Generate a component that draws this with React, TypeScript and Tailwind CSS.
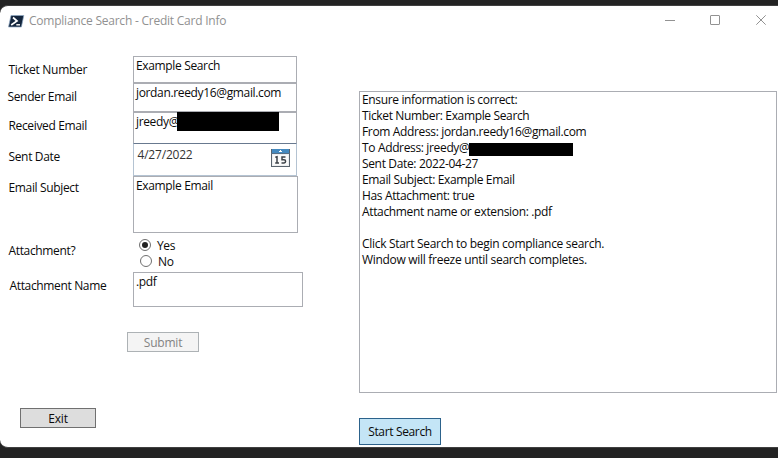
import type { ReactNode } from 'react';

function Row({ label, height, labelClass, children }: { label: string; height: string; labelClass: string; children: ReactNode }) {
  return (
    <div className={`flex ${height}`}>
      <div className={`w-[133px] shrink-0 whitespace-nowrap ${labelClass}`}>{label}</div>
      {children}
    </div>
  );
}

function PowerShellIcon() {
  return (
    <svg width="17" height="13" viewBox="0 0 17 13" className="shrink-0">
      <path d="M3 .5H15.8L13.4 12H.5Z" fill="#14263d" stroke="#8fa9c4" strokeWidth=".7" />
      <path d="M5 2.5L9 6L3.2 10" fill="none" stroke="#fff" strokeWidth="1.7" />
      <path d="M8.3 9.8H12" stroke="#fff" strokeWidth="1.4" />
    </svg>
  );
}

function CalendarIcon() {
  return (
    <svg width="19" height="18" viewBox="0 0 19 18" shapeRendering="crispEdges" className="ml-auto mr-[6px] mt-[2px] shrink-0">
      <rect x=".5" y=".5" width="18" height="17" fill="#eceef0" stroke="#59636d" />
      <rect x="2" y="6" width="15" height="10" fill="#fafafa" />
      <rect x="1" y="0" width="17" height="4" fill="#4489bf" />
      <rect x="0" y="4" width="19" height="1" fill="#566f86" />
      <path d="M9 1H10V3H9ZM8 2H11V3H8Z" fill="#fff" />
      <g fill="none" stroke="#3c4248" strokeWidth="1.5" shapeRendering="auto">
        <path d="M4.3 8.3L6 7.8V14M4.2 14H8" />
        <path d="M14.5 8H11V10.7H13Q14.6 10.7 14.6 12.3T13 14H10.5" />
      </g>
    </svg>
  );
}

function Radio({ checked, label }: { checked?: boolean; label: string }) {
  return (
    <div className={`flex h-4 items-center ${checked ? 'pl-[6px]' : 'pl-[7px]'}`}>
      <span className="flex size-3 items-center justify-center rounded-full border border-[#707070] bg-white">
        {checked && <span className="size-[6px] rounded-full bg-[#212121]" />}
      </span>
      <span className="pl-[6px] pt-[2px]">{label}</span>
    </div>
  );
}

export default function App() {
  return (
    <div className="h-[458px] w-[778px] overflow-hidden bg-[#232323] pt-[5px] font-['Open_Sans','Noto_Sans',sans-serif] text-[12px] leading-4 tracking-[-0.35px] text-[#0a0a0a]">
      <div className="flex h-[443px] flex-col rounded-l-[8px] border-y border-[#404040] bg-white">
        <header className="flex h-[30px] shrink-0 items-center pl-2 tracking-[-0.23px] text-[#919191]">
          <PowerShellIcon />
          <h1 className="ml-1 whitespace-nowrap">Compliance Search - Credit Card Info</h1>
          <svg width="102" height="12" viewBox="0 0 102 12" fill="none" stroke="#929292" className="ml-auto mr-[11px]">
            <path d="M0 5.5H10" />
            <rect x="45.5" y=".5" width="9" height="9" rx=".5" />
            <path d="M91.3 .3L100.7 9.7M100.7 .3L91.3 9.7" />
          </svg>
        </header>
        <main className="flex flex-1">
          <form className="w-[359px] shrink-0 pt-5">
            <Row label="Ticket Number" height="h-[27px]" labelClass="pl-[8.5px] pt-[6px] tracking-[-0.28px]">
              <div className="w-[164px] border border-[#abadb3] pl-[2px] pt-px">Example Search</div>
            </Row>
            <Row label="Sender Email" height="h-[29px]" labelClass="pl-[7.5px] pt-[6px]">
              <div className="w-[164px] border border-[#abadb3] pl-[2px] pt-px">jordan.reedy16@gmail.com</div>
            </Row>
            <Row label="Received Email" height="h-[31px]" labelClass="pl-[8.5px] pt-[6px]">
              <div className="flex w-[164px] border border-b-0 border-[#abadb3] pl-[2px] pt-px">
                <span className="w-[41px]">jreedy@</span>
                <span className="-mt-[2px] h-[19px] w-[102px] bg-black" />
              </div>
            </Row>
            <Row label="Sent Date" height="h-[33px]" labelClass="pl-[8.5px] pt-[6px]">
              <div className="flex w-[164px] border border-[#b4c3d2] border-t-[#68798f] pl-[3.5px] pt-[3px] tracking-[-0.2px] text-[#333]">
                <span>4/27/2022</span>
                <CalendarIcon />
              </div>
            </Row>
            <Row label="Email Subject" height="h-[57px]" labelClass="pl-[8.5px] pt-1">
              <div className="w-[165px] border border-[#abadb3] pl-[2px] pt-px">Example Email</div>
            </Row>
            <Row label="Attachment?" height="h-[39px]" labelClass="pl-[8.5px] pt-[10px]">
              <div className="pt-1">
                <Radio checked label="Yes" />
                <Radio label="No" />
              </div>
            </Row>
            <Row label="Attachment Name" height="h-[35px]" labelClass="pl-[9.5px] pt-[6px]">
              <div className="w-[170px] border border-[#abadb3] pl-[2px] pt-px">.pdf</div>
            </Row>
            <button type="button" disabled className="ml-[127px] mt-[25px] block h-5 w-[72px] border border-[#adb2b5] bg-[#f4f4f4] pt-[2px] tracking-[-0.2px] text-[#838383]">Submit</button>
            <button type="button" className="ml-5 mt-14 block h-5 w-[76px] border border-[#707070] bg-[#ddd] pt-[2px] tracking-[-0.2px]">Exit</button>
          </form>
          <section className="w-[418px] pt-[55px]">
            <div className="h-[302px] whitespace-nowrap border border-[#abadb3] pl-[2px]">
              <p>Ensure information is correct:</p>
              <p>Ticket Number: Example Search</p>
              <p>From Address: jordan.reedy16@gmail.com</p>
              <p className="flex">
                <span className="w-[107px]">To Address: jreedy@</span>
                <span className="mt-[3px] h-[13px] w-[104px] bg-black" />
              </p>
              <p>Sent Date: 2022-04-27</p>
              <p>Email Subject: Example Email</p>
              <p>Has Attachment: true</p>
              <p>Attachment name or extension: .pdf</p>
              <p className="mt-4 tracking-[-0.3px]">Click Start Search to begin compliance search.</p>
              <p className="tracking-[-0.3px]">Window will freeze until search completes.</p>
            </div>
            <button type="button" className="mt-[25px] block h-[27px] w-[82px] border border-[#2c628b] bg-[#c4e5f6] pt-px">Start Search</button>
          </section>
        </main>
      </div>
    </div>
  );
}
